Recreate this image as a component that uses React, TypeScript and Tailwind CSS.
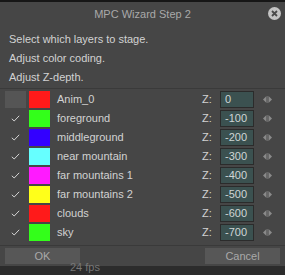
import React from "react";

const rows = [
  { name: "Anim_0", color: "#ff1a1a", z: "0", checked: false },
  { name: "foreground", color: "#33ff1a", z: "-100", checked: true },
  { name: "middleground", color: "#3300ff", z: "-200", checked: true },
  { name: "near mountain", color: "#66ffff", z: "-300", checked: true },
  { name: "far mountains 1", color: "#ff1aff", z: "-400", checked: true },
  { name: "far mountains 2", color: "#ffff1a", z: "-500", checked: true },
  { name: "clouds", color: "#ff1a1a", z: "-600", checked: true },
  { name: "sky", color: "#33ff1a", z: "-700", checked: true },
];

function Check() {
  return (
    <svg width="9" height="7" viewBox="0 0 9 7">
      <path d="M0.8 3.8 L3.2 6 L8.2 0.8" fill="none" stroke="#d4d4d4" strokeWidth="1" />
    </svg>
  );
}

function Spinner() {
  return (
    <svg width="9" height="7" viewBox="0 0 9 7">
      <path d="M3.5 0 L3.5 7 L0 3.5 Z" fill="#8a8a8a" />
      <rect x="4" y="0" width="1" height="7" fill="#666" />
      <path d="M5.5 0 L5.5 7 L9 3.5 Z" fill="#8a8a8a" />
    </svg>
  );
}

export default function App() {
  return (
    <div
      className="w-[285px] h-[275px] bg-[#2a2a2a] overflow-hidden flex flex-col"
      style={{ fontFamily: '"Liberation Sans", Arial, sans-serif' }}
    >
      <div className="h-[2px] bg-[#161616]" />
      <div className="bg-[#464646] h-[264px] flex flex-col">
        <div className="relative h-[24px] flex items-center justify-center text-[11px] text-[#a9a9a9]">
          MPC Wizard Step 2
          <div className="absolute right-[4px] top-[5px] w-[13px] h-[13px] rounded-full bg-[#c4c4c4] flex items-center justify-center">
            <svg width="7" height="7" viewBox="0 0 7 7">
              <path d="M1 1 L6 6 M6 1 L1 6" stroke="#4a4a4a" strokeWidth="1.8" />
            </svg>
          </div>
        </div>
        <div className="pl-[9px] text-[11px] text-[#d2d2d2] leading-[19px] pt-[4px] h-[62px]">
          <div>Select which layers to stage.</div>
          <div>Adjust color coding.</div>
          <div>Adjust Z-depth.</div>
        </div>
        <div className="h-px bg-[#3a3a3a]" />
        <div className="flex flex-col pt-[2px] gap-[2px]">
          {rows.map((r) => (
            <div key={r.name} className="flex items-center h-[17px]">
              <div className="ml-[5px] w-[21px] h-[17px] flex items-center justify-center">
                {r.checked ? (
                  <Check />
                ) : (
                  <div className="w-[21px] h-[17px] bg-[#555555]" />
                )}
              </div>
              <div
                className="ml-[3px] w-[21px] h-[17px]"
                style={{ backgroundColor: r.color }}
              />
              <div className="ml-[7px] flex-1 text-[11px] text-[#d2d2d2]">{r.name}</div>
              <div className="text-[11px] text-[#d2d2d2] w-[18px]">Z:</div>
              <div className="ml-[0px] w-[34px] h-[17px] bg-[#3b5150] border border-[#2b2b2b] text-[11px] text-[#cfd6d6] pl-[4px] leading-[15px]">
                {r.z}
              </div>
              <div className="ml-[9px] mr-[13px] flex items-center">
                <Spinner />
              </div>
            </div>
          ))}
        </div>
        <div className="mt-[4px] h-px bg-[#3a3a3a]" />
        <div className="flex justify-between px-[5px] pt-[2px]">
          <div className="w-[75px] h-[16px] bg-[#575757] text-[11px] text-[#a9a9a9] flex items-center justify-center">
            OK
          </div>
          <div className="w-[75px] h-[16px] bg-[#575757] text-[11px] text-[#a9a9a9] flex items-center justify-center">
            Cancel
          </div>
        </div>
      </div>
      <div className="flex-1 bg-[#2c2c2c] relative text-[11px] text-[#777]">
        <div className="absolute left-[70px] top-[-5px] leading-[12px]">24 fps</div>
      </div>
    </div>
  );
}
